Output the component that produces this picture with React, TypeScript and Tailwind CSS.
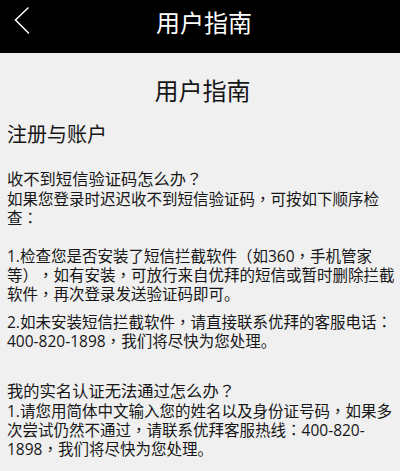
import React from 'react'

const font = "font-['Open_Sans','Noto_Sans_CJK_SC',sans-serif]"

// the screenshot's font centres ，：？ in their cell; the TC cut of Noto does the same
const T: React.FC<{ children: string }> = ({ children }) => (
  <>
    {children.split(/([，：？])/).map((part, i) =>
      /^[，：？]$/.test(part) ? (
        <span key={i} className="font-['Noto_Sans_CJK_TC',sans-serif] leading-none">
          {part}
        </span>
      ) : (
        <React.Fragment key={i}>{part}</React.Fragment>
      ),
    )}
  </>
)

const BackIcon = () => (
  <svg width="16" height="28" viewBox="0 0 16 28" fill="none" className="block">
    <path d="M14 2 L1.5 14 L14.5 27" stroke="#fff" strokeWidth="1.5" strokeLinecap="round" />
  </svg>
)

const App: React.FC = () => {
  return (
    <div className={`${font} w-[400px] h-[471px] overflow-hidden bg-[#f0f0f0] text-[#161616]`}>
      {/* Top bar */}
      <header className="relative h-[53px] bg-black text-white">
        <button type="button" className="absolute left-[14px] top-[6px]">
          <BackIcon />
        </button>
        <h1 className="pt-[7px] pl-[8px] text-center text-[24px] leading-[32px] font-normal">用户指南</h1>
      </header>

      <main className="pl-[7px] pr-[3px] [text-spacing-trim:space-all]">
        <h2 className="mt-[22px] pl-[1px] text-center text-[24px] leading-[32px]">用户指南</h2>
        <h3 className="mt-[14px] text-[20px] leading-[28px]">注册与账户</h3>

        <p className="mt-[19px] text-[16.3px] leading-[22px]">
          <T>收不到短信验证码怎么办？</T>
        </p>
        <p className="text-[15.5px] leading-[19px]">
          <T>如果您登录时迟迟收不到短信验证码，可按如下顺序检查：</T>
        </p>
        <p className="mt-[19px] text-[15.5px] leading-[19px]">
          <T>1.检查您是否安装了短信拦截软件（如360，手机管家等），如有安装，可放行来自优拜的短信或暂时删除拦截软件，再次登录发送验证码即可。</T>
        </p>
        <p className="mt-[9px] text-[15.5px] leading-[19px]">
          <T>2.如未安装短信拦截软件，请直接联系优拜的客服电话：400-820-1898，我们将尽快为您处理。</T>
        </p>

        <p className="mt-[29px] text-[16.3px] leading-[22px]">
          <T>我的实名认证无法通过怎么办？</T>
        </p>
        <p className="text-[15.5px] leading-[19px]">
          <T>1.请您用简体中文输入您的姓名以及身份证号码，如果多次尝试仍然不通过，请联系优拜客服热线：400-820-1898，我们将尽快为您处理。</T>
        </p>
      </main>
    </div>
  )
}

export default App
